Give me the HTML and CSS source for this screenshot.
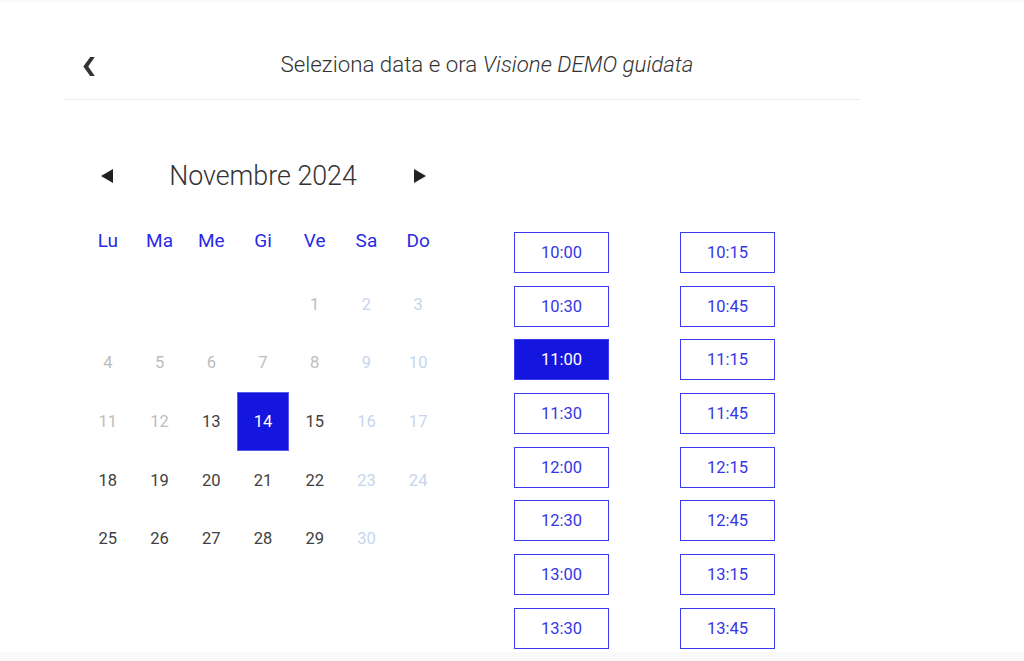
FILE: index.html
```html
<!DOCTYPE html>
<html lang="it">
<head>
<meta charset="utf-8">
<title>Seleziona data e ora</title>
<link rel="stylesheet" href="styles.css">
</head>
<body>
<div class="page">
  <div class="topstrip"></div>
  <header class="header">
    <button class="back" aria-label="Indietro">
      <svg width="12" height="19" viewBox="0 0 12 19"><polygon points="11.8,0 7.2,0 0.3,9.5 7.2,19 11.8,19 5.2,9.5" fill="#333"/></svg>
    </button>
    <h1 class="title">Seleziona data e ora <em>Visione DEMO guidata</em></h1>
  </header>
  <main class="main">
    <section class="calendar">
      <div class="nav">
        <button class="arrow" aria-label="Mese precedente"><svg width="12" height="14" viewBox="0 0 12 14"><polygon points="12,0 12,14 0,7" fill="#222"/></svg></button>
        <div class="month">Novembre 2024</div>
        <button class="arrow" aria-label="Mese successivo"><svg width="12" height="14" viewBox="0 0 12 14"><polygon points="0,0 0,14 12,7" fill="#222"/></svg></button>
      </div>
      <div class="weekdays">
        <span>Lu</span><span>Ma</span><span>Me</span><span>Gi</span><span>Ve</span><span>Sa</span><span>Do</span>
      </div>
      <div class="days">
        <span></span><span></span><span></span><span></span>
        <span class="past">1</span><span class="we">2</span><span class="we">3</span>
        <span class="past">4</span><span class="past">5</span><span class="past">6</span><span class="past">7</span><span class="past">8</span><span class="we">9</span><span class="we">10</span>
        <span class="past">11</span><span class="past">12</span><span class="av">13</span><span class="sel">14</span><span class="av">15</span><span class="we">16</span><span class="we">17</span>
        <span class="av">18</span><span class="av">19</span><span class="av">20</span><span class="av">21</span><span class="av">22</span><span class="we">23</span><span class="we">24</span>
        <span class="av">25</span><span class="av">26</span><span class="av">27</span><span class="av">28</span><span class="av">29</span><span class="we">30</span><span></span>
      </div>
    </section>
    <section class="slots">
      <button class="slot">10:00</button><button class="slot">10:15</button>
      <button class="slot">10:30</button><button class="slot">10:45</button>
      <button class="slot active">11:00</button><button class="slot">11:15</button>
      <button class="slot">11:30</button><button class="slot">11:45</button>
      <button class="slot">12:00</button><button class="slot">12:15</button>
      <button class="slot">12:30</button><button class="slot">12:45</button>
      <button class="slot">13:00</button><button class="slot">13:15</button>
      <button class="slot">13:30</button><button class="slot">13:45</button>
    </section>
  </main>
  <footer class="footer"></footer>
</div>
</body>
</html>
```
FILE: styles.css
```css
* { box-sizing: border-box; }
html, body { margin: 0; padding: 0; }
body {
  background: #ffffff;
  font-family: Roboto, "Liberation Sans", sans-serif;
  color: #333;
  overflow: hidden;
}
.page {
  height: 661px;
  display: flex;
  flex-direction: column;
}
.topstrip {
  height: 2px;
  background: #fbf8f5;
  flex: none;
}
.header {
  flex: none;
  margin-left: 64px;
  width: 796px;
  padding-top: 27px;
  height: 98px;
  border-bottom: 1px solid #ebebeb;
  display: flex;
  align-items: flex-start;
}
.back {
  width: 48px;
  height: 70px;
  border: none;
  background: none;
  padding: 4px 0 0 19px;
  display: flex;
  align-items: center;
  cursor: pointer;
}
.back svg { display: block; }
.title {
  flex: 1;
  margin: 0;
  height: 70px;
  line-height: 70px;
  text-align: center;
  font-size: 22.3px;
  font-weight: 300;
  color: #333;
  padding-left: 2px;
}
.title em { font-style: italic; }
.main {
  flex: 1;
  overflow: hidden;
  display: flex;
  align-items: flex-start;
  padding-left: 82px;
  gap: 70px;
}
.calendar {
  width: 362px;
  padding-top: 56px;
}
.nav {
  display: grid;
  grid-template-columns: 51.7px 1fr 51.7px;
  align-items: center;
  height: 40px;
}
.arrow {
  border: none;
  background: none;
  padding: 0;
  height: 40px;
  display: flex;
  align-items: center;
  justify-content: center;
  cursor: pointer;
}
.arrow svg { display: block; }
.nav .arrow:first-child { padding-right: 2px; }
.nav .arrow:last-child { padding-left: 4px; }
.month {
  text-align: center;
  font-size: 26.8px;
  font-weight: 300;
  color: #333;
}
.weekdays {
  margin-top: 24px;
  display: grid;
  grid-template-columns: repeat(7, 1fr);
  height: 40px;
  align-items: center;
  text-align: center;
  font-size: 19px;
  font-weight: 400;
  color: #2a2ae6;
  margin-bottom: 15px;
}
.days {
  display: grid;
  grid-template-columns: repeat(7, 1fr);
  grid-auto-rows: 58.6px;
  text-align: center;
  font-size: 16.5px;
}
.days span {
  display: flex;
  align-items: center;
  justify-content: center;
}
.past { color: #bdbdbd; }
.we { color: #c6d5ee; }
.av { color: #404040; }
.sel {
  background: #1515e0;
  color: #ffffff;
  border: 1px solid #5a5af0;
}
.slots {
  padding-top: 132px;
  display: grid;
  grid-template-columns: 95px 95px;
  column-gap: 71px;
  row-gap: 12.7px;
}
.slot {
  height: 41px;
  border: 1.5px solid #3a3af0;
  background: #ffffff;
  color: #3636e6;
  font-family: Roboto, "Liberation Sans", sans-serif;
  font-size: 16.5px;
  font-weight: 400;
  padding: 0;
  cursor: pointer;
}
.slot.active {
  background: #1515e0;
  color: #ffffff;
}
.footer {
  flex: none;
  height: 9px;
  background: #f9f9f9;
}
```
